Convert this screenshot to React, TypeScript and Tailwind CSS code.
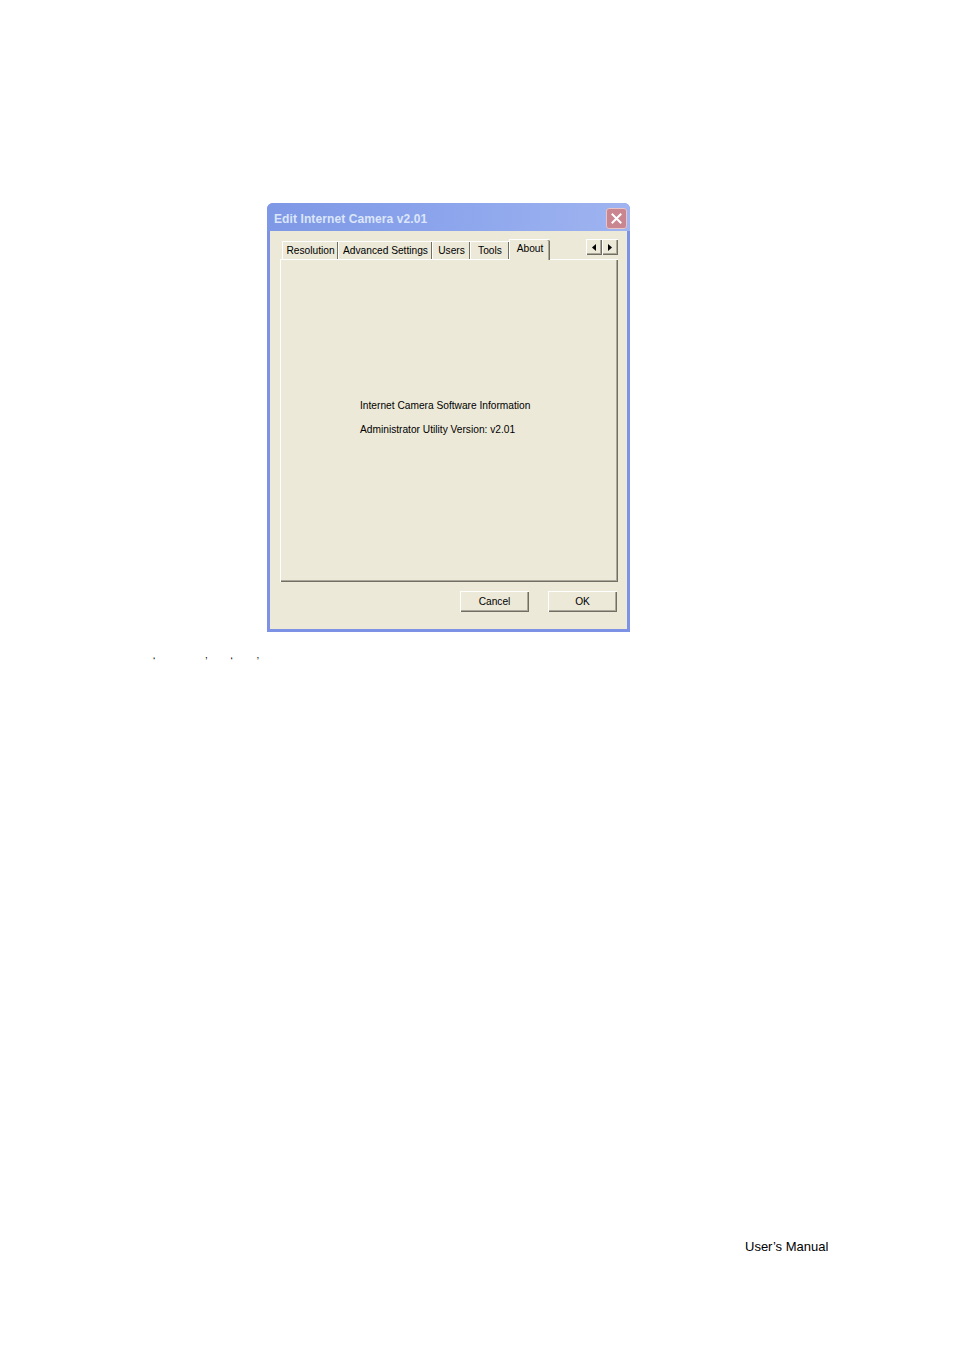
import React from "react";

const tabs = [
  { label: "Resolution", w: "w-[56px]" },
  { label: "Advanced Settings", w: "w-[94px]" },
  { label: "Users", w: "w-[38px]" },
  { label: "Tools", w: "w-[39px]" },
];

const ui = { fontFamily: '"Liberation Sans", Arial, sans-serif' };

const ArrowButton = ({ dir }: { dir: "left" | "right" }) => (
  <div className="w-[16px] h-[16px] bg-[#ece9d8] flex items-center justify-center shadow-[inset_1px_1px_0_#ffffff,inset_-1px_-1px_0_#716f64,inset_-2px_-2px_0_#aca899]">
    <svg width="4" height="7" viewBox="0 0 4 7">
      {dir === "left" ? (
        <path d="M4 0 L0 3.5 L4 7 Z" fill="#000" />
      ) : (
        <path d="M0 0 L4 3.5 L0 7 Z" fill="#000" />
      )}
    </svg>
  </div>
);

const PushButton = ({ children }: { children: React.ReactNode }) => (
  <div className="w-[69px] h-[21px] bg-[#ece9d8] flex items-center justify-center text-[10.2px] text-black shadow-[inset_1px_1px_0_#ffffff,inset_-1px_-1px_0_#716f64,inset_-2px_-2px_0_#aca899]">
    {children}
  </div>
);

export default function App() {
  return (
    <div className="w-[954px] h-[1350px] bg-white flex flex-col">
      <div className="pt-[203px] pl-[267px]">
        {/* dialog window */}
        <div className="w-[363px] h-[429px] flex flex-col rounded-t-[6px] overflow-hidden bg-[#7d92e4]" style={ui}>
          <div className="h-[28px] flex items-center justify-between pl-[7px] pr-[3px] pt-[3px] bg-gradient-to-r from-[#7e98e6] via-[#8ca5ec] to-[#9fb4f0]">
            <span className="text-[12px] font-bold text-[#dce6fa] tracking-[0.1px]">
              Edit Internet Camera v2.01
            </span>
            <div className="w-[21px] h-[21px] rounded-[3px] bg-[#c98690] border border-[#e7c4c8] flex items-center justify-center">
              <svg width="11" height="11" viewBox="0 0 11 11">
                <path d="M1.5 1.5 L9.5 9.5 M9.5 1.5 L1.5 9.5" stroke="#ffffff" strokeWidth="2" strokeLinecap="square" />
              </svg>
            </div>
          </div>
          <div className="flex-1 mx-[3px] mb-[3px] bg-[#ece9d8] flex flex-col pt-[7px] pl-[10px] pr-[9px]">
            {/* tab row */}
            <div className="flex items-end h-[21px] relative z-10">
              <div className="w-[2px]" />
              {tabs.map((t) => (
                <div
                  key={t.label}
                  className={`${t.w} h-[18px] flex items-center justify-center pt-[1px] text-[10.2px] text-black border-l border-t border-white shadow-[inset_-1px_0_0_#716f64]`}
                >
                  {t.label}
                </div>
              ))}
              <div className="w-[41px] h-[21px] flex items-center justify-center text-[10.2px] text-black bg-[#ece9d8] border-l border-t border-white rounded-tr-[2px] shadow-[inset_-1px_0_0_#716f64,inset_-2px_0_0_#aca899] -mb-px pb-[2px]">
                About
              </div>
              <div className="flex-1" />
              <div className="flex self-start mt-[1px]">
                <ArrowButton dir="left" />
                <ArrowButton dir="right" />
              </div>
            </div>
            {/* tab panel */}
            <div className="h-[323px] bg-[#ece9d8] shadow-[inset_1px_1px_0_#ffffff,inset_-1px_-1px_0_#716f64,inset_-2px_-2px_0_#aca899] pl-[80px] pt-[140px] text-[10.2px] text-black">
              <div className="h-[13px] leading-[13px]">Internet Camera Software Information</div>
              <div className="h-[13px] leading-[13px] mt-[11px]">Administrator Utility Version: v2.01</div>
            </div>
            {/* buttons */}
            <div className="flex justify-end gap-[19px] mt-[9px] pr-[1px]">
              <PushButton>Cancel</PushButton>
              <PushButton>OK</PushButton>
            </div>
          </div>
        </div>
      </div>
      {/* stray quote marks */}
      <div className="mt-[24px] h-[12px] flex text-[10px] leading-[12px] text-black" style={ui}>
        <span className="ml-[153px]">‘</span>
        <span className="ml-[50px]">’</span>
        <span className="ml-[23px]">‘</span>
        <span className="ml-[24px]">’</span>
      </div>
      <div className="mt-auto mb-[96px] pl-[745px] text-[13px] leading-[15px] text-black" style={ui}>
        User’s Manual
      </div>
    </div>
  );
}
